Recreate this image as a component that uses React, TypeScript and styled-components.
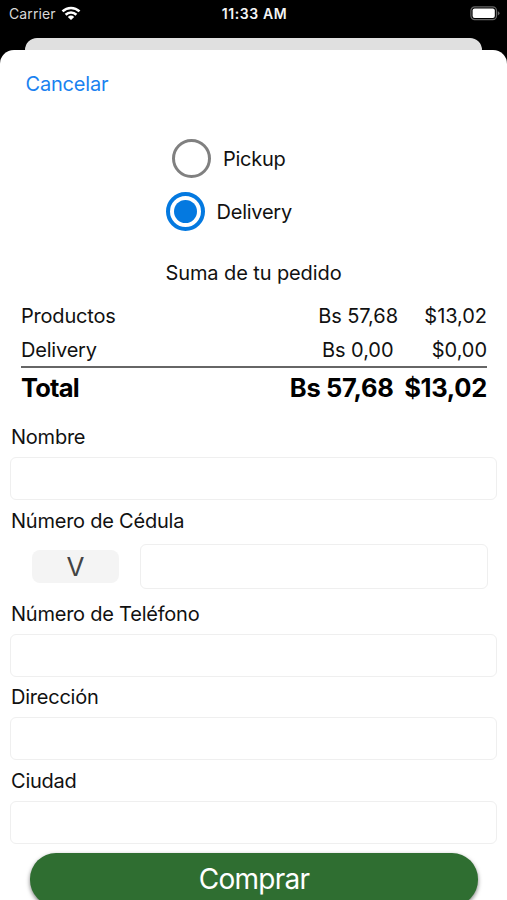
import React, { useState } from "react";
import styled, { createGlobalStyle } from "styled-components";

const GlobalStyle = createGlobalStyle`
  * { box-sizing: border-box; }
  html, body { margin: 0; padding: 0; background: #000; }
  body { overflow: hidden; font-family: Inter, "Liberation Sans", sans-serif; }
  button, input { font-family: inherit; }
`;

const Screen = styled.div`
  display: flex;
  flex-direction: column;
  width: 507px;
  height: 900px;
  overflow: hidden;
  background: #000;
  color: #111;
`;

const StatusBar = styled.header`
  display: grid;
  grid-template-columns: 1fr auto 1fr;
  align-items: center;
  flex: none;
  height: 38px;
  padding: 0 7px 11px 9px;
  color: #f4f4f4;
  font-size: 14px;
`;

const Carrier = styled.div`
  display: flex;
  align-items: center;
  gap: 5px;
  color: #d8d8d8;
  letter-spacing: 0.1px;
`;

const Clock = styled.div`
  font-size: 14px;
  font-weight: 600;
  letter-spacing: 0.6px;
`;

const BatterySlot = styled.div`
  display: flex;
  justify-content: flex-end;
`;

const PreviousCard = styled.div`
  flex: none;
  height: 12px;
  margin: 0 25px;
  border-radius: 12px 12px 0 0;
  background: #e0e0e0;
`;

const Sheet = styled.main`
  display: flex;
  flex-direction: column;
  flex: 1;
  min-height: 0;
  border-radius: 14px 14px 0 0;
  background: #fff;

  > * {
    flex-shrink: 0;
  }
`;

const CancelButton = styled.button`
  align-self: flex-start;
  height: 30px;
  margin: 19px 0 0 25.5px;
  padding: 0;
  border: 0;
  background: none;
  color: #1a82f0;
  font-size: 20px;
  letter-spacing: -0.2px;
`;

const Options = styled.div`
  display: flex;
  flex-direction: column;
  align-items: center;
  gap: 13px;
  margin-top: 39px;
  padding-right: 49.5px;
`;

const Option = styled.button`
  display: flex;
  align-items: center;
  gap: 12px;
  height: 40px;
  padding: 0;
  border: 0;
  background: none;
  color: #111;
  font-size: 20px;
  line-height: 24px;
  letter-spacing: -0.25px;
`;

const OptionName = styled.span<{ $on: boolean }>`
  padding-top: ${(p) => (p.$on ? 1 : 2)}px;
`;

const Ring = styled.span<{ $on: boolean }>`
  display: grid;
  place-items: center;
  width: 39px;
  height: 39px;
  border: ${(p) => (p.$on ? "4px solid #0479e0" : "3px solid #808080")};
  border-radius: 50%;

  &::after {
    content: "";
    width: 23px;
    height: 23px;
    border-radius: 50%;
    background: ${(p) => (p.$on ? "#0479e0" : "transparent")};
  }
`;

const SummaryTitle = styled.h2`
  margin: 27px 0 0;
  font-size: 20px;
  font-weight: 400;
  line-height: 30px;
  letter-spacing: -0.1px;
  text-align: center;
`;

const Summary = styled.section`
  margin: 10px 20px 0 21px;
`;

const SummaryRow = styled.div<{ $total?: boolean; $price: number }>`
  display: grid;
  grid-template-columns: 1fr auto ${(p) => p.$price}px;
  align-items: center;
  height: ${(p) => (p.$total ? 42 : 34)}px;
  padding: ${(p) => (p.$total ? "0 0 2px" : "1px 0 0")};
  border-top: ${(p) => (p.$total ? "2px solid #666" : "0")};
  color: ${(p) => (p.$total ? "#000" : "#111")};
  font-size: ${(p) => (p.$total ? 25.5 : 20)}px;
  font-weight: ${(p) => (p.$total ? 700 : 400)};
  letter-spacing: ${(p) => (p.$total ? -0.3 : -0.05)}px;
  white-space: nowrap;
`;

const RowName = styled.span<{ $tight?: boolean }>`
  letter-spacing: ${(p) => (p.$tight ? -0.8 : -0.2)}px;
`;

const Price = styled.span`
  text-align: right;
`;

const Form = styled.form`
  display: flex;
  flex-direction: column;
  margin: 14px 10px 0;
`;

const Label = styled.label`
  height: 35px;
  padding-left: 1px;
  font-size: 20px;
  line-height: 30px;
  letter-spacing: -0.23px;
`;

const Field = styled.input`
  width: 100%;
  height: 43px;
  margin-bottom: 5.5px;
  padding: 0 12px;
  border: 1px solid #efefef;
  border-radius: 6px;
  background: #fff;
  font-size: 20px;
  outline: none;
`;

const IdRow = styled.div`
  display: flex;
  align-items: center;
  gap: 21px;
  height: 58px;
  padding: 0 9px 7px 22px;
`;

const IdKind = styled.button`
  flex: none;
  width: 87px;
  height: 33px;
  padding: 0;
  border: 0;
  border-radius: 8px;
  background: #f4f4f4;
  color: #444;
  font-size: 26px;
  font-weight: 400;
  line-height: 33px;
`;

const IdField = styled(Field)`
  flex: 1;
  height: 45px;
  margin: 0;
`;

const BuyButton = styled.button`
  width: 448px;
  height: 53px;
  margin: 3.5px 0 0 30px;
  padding: 0;
  border: 0;
  border-radius: 26px;
  background: #2f6e31;
  box-shadow: 0 2px 4px rgba(0, 0, 0, 0.5);
  color: #fff;
  font-size: 28px;
  letter-spacing: -0.75px;
`;

const WifiIcon = () => (
  <svg width="20" height="15" viewBox="0 0 20 15" fill="none" stroke="#fff" strokeWidth="2.6">
    <path d="M1.5 5.4C6.3 .8 13.7 .8 18.5 5.4" />
    <path d="M4.6 8.7C7.7 5.8 12.3 5.8 15.4 8.7" />
    <path d="M10 14.1 6.8 10.9Q10 8.2 13.2 10.9Z" fill="#fff" stroke="none" />
  </svg>
);

const BatteryIcon = () => (
  <svg width="30" height="15" viewBox="0 0 30 15">
    <rect x=".9" y=".9" width="25.6" height="12.7" rx="3.8" fill="none" stroke="#666" strokeWidth="1.2" />
    <rect x="2.6" y="2.6" width="22.2" height="9.3" rx="2" fill="#fff" />
    <path d="M27.8 5.2Q29.5 5.8 29.5 7.3T27.8 9.4Z" fill="#666" />
  </svg>
);

const options = ["Pickup", "Delivery"];

export default function App() {
  const [selected, setSelected] = useState("Delivery");
  return (
    <>
      <GlobalStyle />
      <Screen>
        <StatusBar>
          <Carrier>Carrier<WifiIcon /></Carrier>
          <Clock>11:33 AM</Clock>
          <BatterySlot><BatteryIcon /></BatterySlot>
        </StatusBar>
        <PreviousCard />
        <Sheet>
          <CancelButton>Cancelar</CancelButton>
          <Options>
            {options.map((name) => (
              <Option key={name} onClick={() => setSelected(name)}>
                <Ring $on={selected === name} />
                <OptionName $on={selected === name}>{name}</OptionName>
              </Option>
            ))}
          </Options>
          <SummaryTitle>Suma de tu pedido</SummaryTitle>
          <Summary>
            <SummaryRow $price={89}>
              <RowName>Productos</RowName><span>Bs 57,68</span><Price>$13,02</Price>
            </SummaryRow>
            <SummaryRow $price={93.5}>
              <RowName>Delivery</RowName><span>Bs 0,00</span><Price>$0,00</Price>
            </SummaryRow>
            <SummaryRow $total $price={93.5}>
              <RowName $tight>Total</RowName><span>Bs 57,68</span><Price>$13,02</Price>
            </SummaryRow>
          </Summary>
          <Form onSubmit={(e) => e.preventDefault()}>
            <Label htmlFor="name">Nombre</Label>
            <Field id="name" />
            <Label htmlFor="document">Número de Cédula</Label>
            <IdRow>
              <IdKind type="button">V</IdKind>
              <IdField id="document" />
            </IdRow>
            <Label htmlFor="phone">Número de Teléfono</Label>
            <Field id="phone" />
            <Label htmlFor="address">Dirección</Label>
            <Field id="address" />
            <Label htmlFor="city">Ciudad</Label>
            <Field id="city" />
          </Form>
          <BuyButton>Comprar</BuyButton>
        </Sheet>
      </Screen>
    </>
  );
}
